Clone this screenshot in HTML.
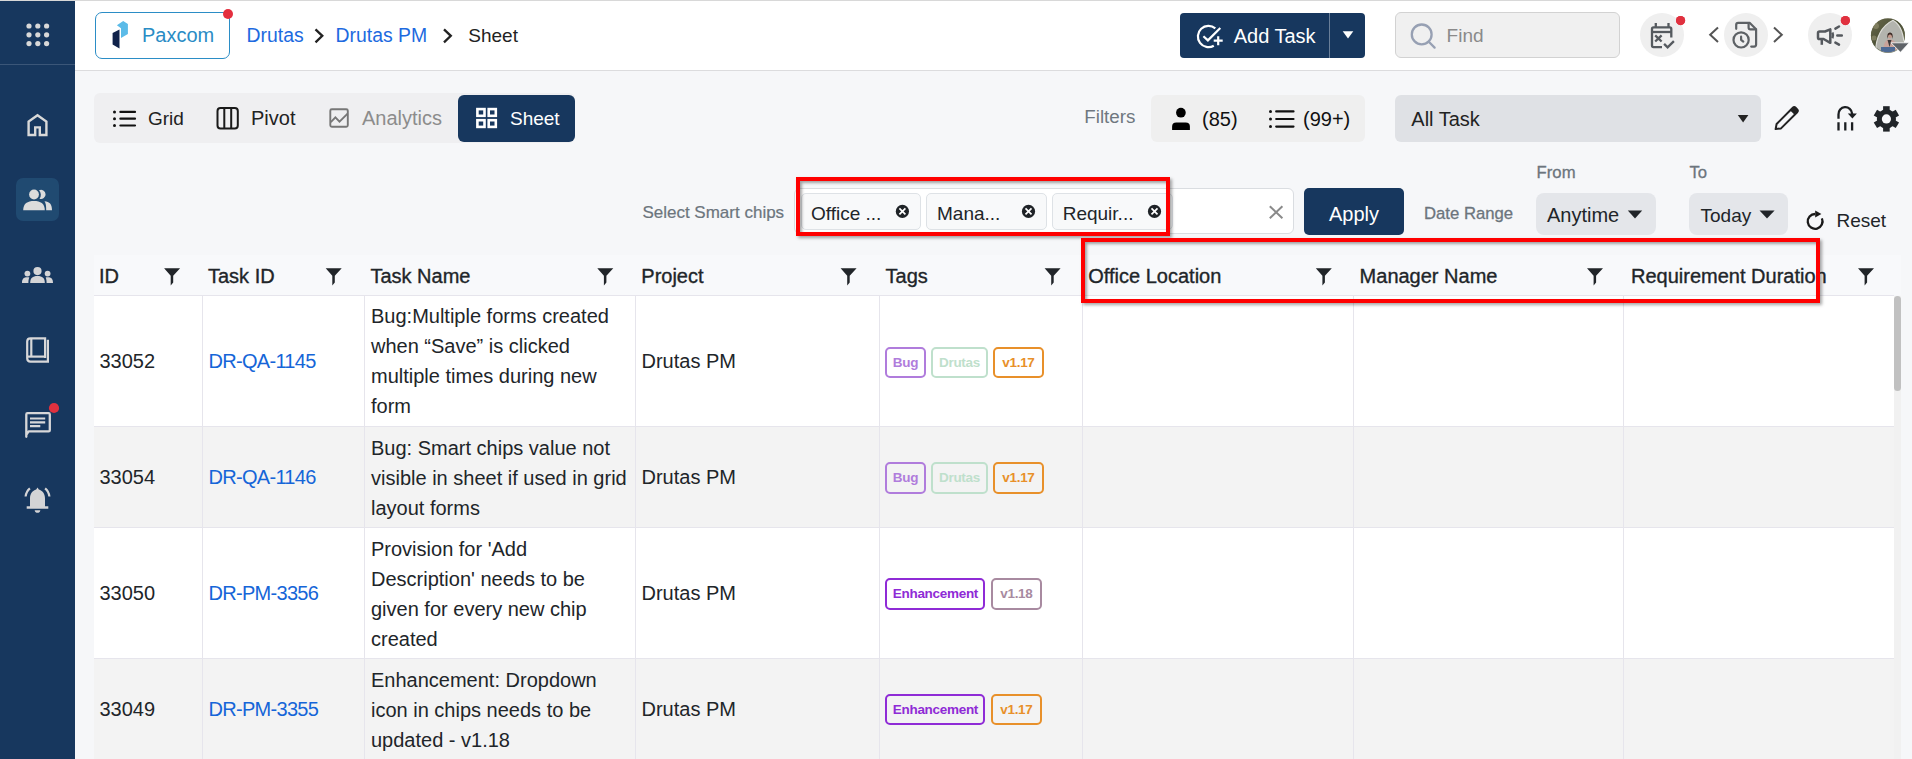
<!DOCTYPE html>
<html><head><meta charset="utf-8">
<style>
*{box-sizing:border-box;margin:0;padding:0}
html,body{width:1912px;height:759px;overflow:hidden;background:#f6f7f9;font-family:"Liberation Sans",sans-serif;color:#212529}
.a{position:absolute}
.t{position:absolute;white-space:nowrap;line-height:1}
svg{position:absolute;overflow:visible}
#side{left:0;top:0;width:75px;height:759px;background:#17375e}
#hdr{left:75px;top:0;width:1837px;height:71px;background:#fff;border-bottom:1px solid #dcdcde}
.circ{position:absolute;width:44px;height:44px;border-radius:50%;background:#efefef}
.rdot{position:absolute;width:10px;height:10px;border-radius:50%;background:#e42f3e}
.col{position:absolute;top:296px;width:1px;height:463px;background:#e6e5ec}
.hrow{position:absolute;left:94px;width:1800px;height:1px;background:#e6e5ec}
.cell{position:absolute;font-size:20px;line-height:30px;white-space:nowrap}
.tag{position:absolute;height:31.3px;border:2px solid;border-radius:5px;font-weight:700;font-size:13.5px;letter-spacing:-0.3px;line-height:27.3px;text-align:center;background:transparent}
.hd{position:absolute;top:266.2px;font-size:20px;line-height:20px;white-space:nowrap;-webkit-text-stroke:0.35px #212529}
.fun{position:absolute;top:268px;width:16px;height:18px}
.red{position:absolute;border:4.5px solid #f00;box-shadow:2px 2px 3px rgba(0,0,0,.35), inset 2px 2px 3px rgba(0,0,0,.35)}
</style></head><body>
<div class="a" style="left:0;top:0;width:1912px;height:1px;background:#d8d8d8;z-index:5"></div>

<!-- sidebar -->
<div id="side" class="a"></div>
<div class="a" style="left:0;top:64px;width:75px;height:1px;background:#3b5678"></div>
<div class="a" style="left:16px;top:178px;width:43px;height:43px;border-radius:7px;background:#204a71"></div>
<!-- header -->
<div id="hdr" class="a"></div>
<div class="a" style="left:95px;top:12px;width:135px;height:47px;border:1.5px solid #2b8dc6;border-radius:7px;background:#fff"></div>
<div class="rdot" style="left:222.5px;top:8.6px"></div>
<div class="t" style="left:142px;top:25.3px;font-size:20px;color:#2a8cc5">Paxcom</div>
<div class="t" style="left:246.5px;top:25.8px;font-size:19.4px;color:#1d6ae0">Drutas</div>
<div class="t" style="left:335.5px;top:25.8px;font-size:19.4px;color:#1d6ae0">Drutas PM</div>
<div class="t" style="left:468.3px;top:26.1px;font-size:19px;color:#222">Sheet</div>
<div class="a" style="left:1180px;top:13px;width:185px;height:45px;border-radius:4px;background:#17375e"></div>
<div class="a" style="left:1329px;top:13px;width:1px;height:45px;background:#6a7f99"></div>
<div class="t" style="left:1233.7px;top:25.9px;font-size:20px;color:#fff">Add Task</div>
<div class="a" style="left:1395px;top:12px;width:225px;height:46px;border:1px solid #d2d2d2;border-radius:6px;background:#f0f0f0"></div>
<div class="t" style="left:1446.6px;top:26.2px;font-size:19px;color:#8a8a8a">Find</div>
<div class="circ" style="left:1640px;top:13px"></div>
<div class="circ" style="left:1724px;top:13px"></div>
<div class="circ" style="left:1808px;top:13px"></div>
<div class="rdot" style="left:1676px;top:16px;width:9px;height:9px"></div>
<div class="rdot" style="left:1841px;top:16px;width:9px;height:9px"></div>
<div class="a" style="left:1871px;top:18.5px;width:34px;height:34px;border-radius:50%;background:radial-gradient(circle at 55% 60%,#c9a89a 0 18%,#8f9a8a 30%,#6f7a60 60%,#4a5238 100%)"></div>
<!-- toolbar -->
<div class="a" style="left:94px;top:93px;width:481px;height:50px;border-radius:6px;background:#efeff1"></div>
<div class="a" style="left:458px;top:95px;width:117px;height:47px;border-radius:6px;background:#17375e"></div>
<div class="t" style="left:148px;top:108.9px;font-size:19px;color:#222">Grid</div>
<div class="t" style="left:251px;top:108px;font-size:20px;color:#222">Pivot</div>
<div class="t" style="left:362px;top:108px;font-size:20px;color:#8c8c8c">Analytics</div>
<div class="t" style="left:510px;top:108.9px;font-size:19px;color:#fff">Sheet</div>
<div class="t" style="left:1084.3px;top:107.9px;font-size:18.8px;color:#6f7780">Filters</div>
<div class="a" style="left:1151px;top:95px;width:214px;height:47px;border-radius:6px;background:#efefef"></div>
<div class="t" style="left:1202px;top:108.7px;font-size:20px;color:#111">(85)</div>
<div class="t" style="left:1303px;top:108.7px;font-size:20px;color:#111">(99+)</div>
<div class="a" style="left:1395px;top:95px;width:366px;height:47px;border-radius:6px;background:#dfe1e5"></div>
<div class="t" style="left:1411.3px;top:109px;font-size:20px;color:#222">All Task</div>
<!-- smart chips row -->
<div class="t" style="left:642.4px;top:204.3px;font-size:17px;color:#6c757d;-webkit-text-stroke:0.2px #6c757d">Select Smart chips</div>
<div class="a" style="left:794px;top:188px;width:500px;height:46px;border:1px solid #dadde1;border-radius:6px;background:#fff"></div>
<div class="a" style="left:801px;top:193px;width:120px;height:36.5px;border:1px solid #dee2e6;border-radius:5px;background:#f8f9fa"></div>
<div class="a" style="left:925.6px;top:193px;width:121px;height:36.5px;border:1px solid #dee2e6;border-radius:5px;background:#f8f9fa"></div>
<div class="a" style="left:1051.6px;top:193px;width:121px;height:36.5px;border:1px solid #dee2e6;border-radius:5px;background:#f8f9fa"></div>
<div class="t" style="left:811px;top:203.9px;font-size:19px;color:#212529">Office ...</div>
<div class="t" style="left:937px;top:203.9px;font-size:19px;color:#212529">Mana...</div>
<div class="t" style="left:1062.7px;top:203.9px;font-size:19px;color:#212529">Requir...</div>
<div class="a" style="left:1304px;top:188px;width:100px;height:46.6px;border-radius:5px;background:#17375e"></div>
<div class="t" style="left:1329px;top:204px;font-size:20px;color:#fff">Apply</div>
<div class="t" style="left:1424px;top:205.9px;font-size:16.7px;color:#6c757d;-webkit-text-stroke:0.3px #6c757d">Date Range</div>
<div class="t" style="left:1536.6px;top:164.6px;font-size:16.7px;color:#6c757d;-webkit-text-stroke:0.3px #6c757d">From</div>
<div class="t" style="left:1689.5px;top:164.6px;font-size:16.7px;color:#6c757d;-webkit-text-stroke:0.3px #6c757d">To</div>
<div class="a" style="left:1536px;top:193px;width:120px;height:41.6px;border-radius:8px;background:#e4e6ea"></div>
<div class="a" style="left:1689px;top:193px;width:99px;height:41.6px;border-radius:8px;background:#e4e6ea"></div>
<div class="t" style="left:1547px;top:205.3px;font-size:20px;color:#212529">Anytime</div>
<div class="t" style="left:1700.5px;top:206.1px;font-size:19px;color:#212529">Today</div>
<div class="t" style="left:1836.5px;top:210.9px;font-size:19px;color:#212529">Reset</div>
<!-- table -->
<div class="a" style="left:94px;top:255px;width:1807px;height:40px;background:#f8f9fb"></div>
<div class="a" style="left:94px;top:296px;width:1800px;height:130px;background:#fff"></div>
<div class="a" style="left:94px;top:426px;width:1800px;height:101px;background:#f3f3f3"></div>
<div class="a" style="left:94px;top:527px;width:1800px;height:131px;background:#fff"></div>
<div class="a" style="left:94px;top:659px;width:1800px;height:100px;background:#f3f3f3"></div>
<div class="hrow" style="top:295px"></div>
<div class="hrow" style="top:426px"></div>
<div class="hrow" style="top:527px"></div>
<div class="hrow" style="top:658px"></div>
<div class="col" style="left:202px"></div>
<div class="col" style="left:364px"></div>
<div class="col" style="left:635px"></div>
<div class="col" style="left:879px"></div>
<div class="col" style="left:1082px"></div>
<div class="col" style="left:1353px"></div>
<div class="col" style="left:1623px"></div>
<div class="a" style="left:1894px;top:296px;width:7px;height:463px;background:#f1f1f1"></div>
<div class="a" style="left:1894px;top:296px;width:7px;height:95px;border-radius:4px;background:#c1c1c1"></div>
<div class="hd" style="left:99px">ID</div>
<div class="hd" style="left:208px">Task ID</div>
<div class="hd" style="left:370.4px">Task Name</div>
<div class="hd" style="left:641.3px">Project</div>
<div class="hd" style="left:885.6px">Tags</div>
<div class="hd" style="left:1088.3px">Office Location</div>
<div class="hd" style="left:1359.6px">Manager Name</div>
<div class="hd" style="left:1631px">Requirement Duration</div>
<div class="t" style="left:99.4px;top:351.3px;font-size:20px;color:#212529">33052</div>
<div class="t" style="left:208.5px;top:351.3px;font-size:20px;color:#1565d8;letter-spacing:-0.7px">DR-QA-1145</div>
<div class="cell" style="left:371px;top:301.3px;line-height:30px;color:#212529">Bug:Multiple forms created<br>when “Save” is clicked<br>multiple times during new<br>form</div>
<div class="t" style="left:641.5px;top:351.3px;font-size:20px;color:#212529">Drutas PM</div>
<div class="tag" style="left:885.4px;top:346.6px;width:40.3px;border-color:#b07cdc;color:#b07cdc">Bug</div>
<div class="tag" style="left:931.4px;top:346.6px;width:56.2px;border-color:#bfe0cc;color:#bfe0cc">Drutas</div>
<div class="tag" style="left:993.3px;top:346.6px;width:50.3px;border-color:#e8902a;color:#e8902a">v1.17</div>
<div class="t" style="left:99.4px;top:466.8px;font-size:20px;color:#212529">33054</div>
<div class="t" style="left:208.5px;top:466.8px;font-size:20px;color:#1565d8;letter-spacing:-0.7px">DR-QA-1146</div>
<div class="cell" style="left:371px;top:432.9px;line-height:30px;color:#212529">Bug: Smart chips value not<br>visible in sheet if used in grid<br>layout forms</div>
<div class="t" style="left:641.5px;top:466.8px;font-size:20px;color:#212529">Drutas PM</div>
<div class="tag" style="left:885.4px;top:462.3px;width:40.3px;border-color:#b07cdc;color:#b07cdc">Bug</div>
<div class="tag" style="left:931.4px;top:462.3px;width:56.2px;border-color:#bfe0cc;color:#bfe0cc">Drutas</div>
<div class="tag" style="left:993.3px;top:462.3px;width:50.3px;border-color:#e8902a;color:#e8902a">v1.17</div>
<div class="t" style="left:99.4px;top:582.8px;font-size:20px;color:#212529">33050</div>
<div class="t" style="left:208.5px;top:582.8px;font-size:20px;color:#1565d8;letter-spacing:-0.7px">DR-PM-3356</div>
<div class="cell" style="left:371px;top:534px;line-height:30px;color:#212529">Provision for 'Add<br>Description' needs to be<br>given for every new chip<br>created</div>
<div class="t" style="left:641.5px;top:582.8px;font-size:20px;color:#212529">Drutas PM</div>
<div class="tag" style="left:885.4px;top:578.4px;width:100.1px;border-color:#8f2bd6;color:#8f2bd6">Enhancement</div>
<div class="tag" style="left:991px;top:578.4px;width:50.8px;border-color:#a88aa0;color:#a88aa0">v1.18</div>
<div class="t" style="left:99.4px;top:698.8px;font-size:20px;color:#212529">33049</div>
<div class="t" style="left:208.5px;top:698.8px;font-size:20px;color:#1565d8;letter-spacing:-0.7px">DR-PM-3355</div>
<div class="cell" style="left:371px;top:664.9px;line-height:30px;color:#212529">Enhancement: Dropdown<br>icon in chips needs to be<br>updated - v1.18</div>
<div class="t" style="left:641.5px;top:698.8px;font-size:20px;color:#212529">Drutas PM</div>
<div class="tag" style="left:885.4px;top:693.9px;width:100.1px;border-color:#8f2bd6;color:#8f2bd6">Enhancement</div>
<div class="tag" style="left:991px;top:693.9px;width:50.8px;border-color:#e8902a;color:#e8902a">v1.17</div>
<svg width="1912" height="759" style="left:0;top:0" viewBox="0 0 1912 759">
<circle cx="29" cy="26" r="2.6" fill="#d8d8d8"/>
<circle cx="29" cy="34.8" r="2.6" fill="#d8d8d8"/>
<circle cx="29" cy="43.6" r="2.6" fill="#d8d8d8"/>
<circle cx="37.8" cy="26" r="2.6" fill="#d8d8d8"/>
<circle cx="37.8" cy="34.8" r="2.6" fill="#d8d8d8"/>
<circle cx="37.8" cy="43.6" r="2.6" fill="#d8d8d8"/>
<circle cx="46.6" cy="26" r="2.6" fill="#d8d8d8"/>
<circle cx="46.6" cy="34.8" r="2.6" fill="#d8d8d8"/>
<circle cx="46.6" cy="43.6" r="2.6" fill="#d8d8d8"/>
<path d="M28.6 135 V121.6 L37.5 115.2 L46.4 121.6 V135 H39.8 V127.4 H35.2 V135 Z" fill="none" stroke="#d9d9d9" stroke-width="2.4" stroke-linejoin="miter"/>
<g fill="#dcdcdc"><circle cx="34" cy="194.5" r="4.9"/><path d="M23.2 210.2 C23.2 203.5 27.5 201 34 201 C40.5 201 44.8 203.5 44.8 210.2 Z"/><path d="M39 190.3 A4.6 4.6 0 1 1 39.5 198.8 A6.5 6.5 0 0 0 39 190.3 Z"/><path d="M44.5 201.2 C49.5 201.6 52 204 52 210.2 H46.2 C46.2 205.5 45.8 203 44.5 201.2 Z"/></g>
<g fill="#d4d4d6"><circle cx="37.5" cy="271.1" r="4.1"/><circle cx="27.4" cy="273.6" r="2.9"/><circle cx="47.6" cy="273.6" r="2.9"/><path d="M30.2 283 C30.2 278 32.5 276 37.5 276 C42.5 276 44.8 278 44.8 283 Z"/><path d="M22 283 C22 279 23.5 277.3 27.4 277.3 C28.3 277.3 28.9 277.4 29.3 277.6 C28.6 279 28.4 281 28.4 283 Z"/><path d="M53 283 C53 279 51.5 277.3 47.6 277.3 C46.7 277.3 46.1 277.4 45.7 277.6 C46.4 279 46.6 281 46.6 283 Z"/></g>
<g fill="none" stroke="#d7d7d9" stroke-width="2.2"><path d="M45.1 358 V338.3 H30.5 Q27.2 338.3 27.2 341.6 V358.3 Q27.2 361.6 30.5 361.6 H47.9 V339.7"/><path d="M27.2 356.6 H45.1"/><path d="M31.3 338.5 V356.6"/></g>
<g fill="none" stroke="#d7d7d9" stroke-width="2.3" stroke-linejoin="round"><path d="M26.3 436.8 V414.4 Q26.3 413.2 27.5 413.2 H48.6 Q49.8 413.2 49.8 414.4 V430.2 Q49.8 431.4 48.6 431.4 H28.6 L26.3 435 Z"/></g><g stroke="#d7d7d9" stroke-width="2.2"><path d="M30 418.5 H45.2 M30 422.3 H45.2 M30 426.1 H40.3"/></g>
<circle cx="54" cy="408" r="5.1" fill="#e0313f"/>
<g fill="#d4d4d6"><path d="M37.5 487.5 L38.8 489.6 C42.4 490.6 45 493.8 45 498.5 V506.2 H48.3 V508.8 H26.7 V506.2 H30 V498.5 C30 493.8 32.6 490.6 36.2 489.6 Z"/><path d="M34.6 510.2 H40.4 C40 512 38.9 512.8 37.5 512.8 C36.1 512.8 35 512 34.6 510.2 Z"/></g><g fill="none" stroke="#d4d4d6" stroke-width="2.2"><path d="M29.9 488.3 C27.5 490.3 26 493 25.6 496.5"/><path d="M45.1 488.3 C47.5 490.3 49 493 49.4 496.5"/></g>
<path d="M112.6 33 L119.5 29.5 V48.5 L112.6 44.6 Z" fill="#10224a"/>
<path d="M116.9 25.3 L123.2 20.9 L127.9 24 V34 L121 38 V28.2 Z" fill="#5bbbe8"/>
<g fill="none" stroke="#222" stroke-width="2.3"><path d="M315.5 29.3 L322.3 35.8 L315.5 42.3"/><path d="M444 29.3 L450.8 35.8 L444 42.3"/></g>
<g fill="none" stroke="#fff" stroke-width="2.2"><path d="M1215.3 28.4 A10.6 10.6 0 1 0 1213.8 45.7"/><path d="M1203.4 36.2 L1207.9 40.4 L1220.3 28"/><path d="M1218.2 36.2 V45.2 M1213.7 40.7 H1222.7"/></g>
<path d="M1342.7 31.3 H1353.3 L1348 38.6 Z" fill="#fff"/>
<g fill="none" stroke="#97a0b3" stroke-width="2.3"><circle cx="1421.7" cy="34.4" r="9.9"/><path d="M1428.8 41.8 L1434.6 47.6" stroke-linecap="round"/></g>
<g fill="none" stroke="#555a5f" stroke-width="2.3"><path d="M1662 47.1 H1653.5 Q1652 47.1 1652 45.6 V28.9 Q1652 27.4 1653.5 27.4 H1669.8 Q1671.3 27.4 1671.3 28.9 V37.4"/><path d="M1652 32 H1671.3"/><path d="M1655.8 23 V27.4 M1668.5 23 V27.4"/><path d="M1655.2 35.3 L1661.6 41.5 M1661.6 35.3 L1655.2 41.5"/><path d="M1664.1 43.9 L1667.6 47.4 L1673.9 41.1"/></g>
<g fill="none" stroke="#555" stroke-width="2"><path d="M1718 27.6 L1710.2 34.8 L1718 42"/><path d="M1774 27.6 L1781.8 34.8 L1774 42"/></g>
<g fill="none" stroke="#5d6165" stroke-width="2.2" stroke-linecap="round" stroke-linejoin="round"><path d="M1736.2 28.8 V24.8 Q1736.2 22.8 1738.2 22.8 H1749.6 L1756.1 29.3 V44.6 Q1756.1 46.6 1754.1 46.6 H1751.2"/><path d="M1748.6 23 V27.5 Q1748.6 29.3 1750.4 29.3 H1755.8"/><circle cx="1741.1" cy="39.9" r="7.6"/><path d="M1741.1 36.7 V39.8 L1743.3 41.6"/></g>
<g fill="none" stroke="#55595e" stroke-width="2.5"><path d="M1830.3 29.4 V42.8 L1823.6 39 H1819.6 Q1818 39 1818 37.4 V33.1 Q1818 31.5 1819.6 31.5 H1825 Z" stroke-linejoin="round"/><path d="M1821.8 39 V44.8"/><path d="M1832.4 32.4 Q1833.6 35.2 1832.4 38.2"/><path d="M1835.4 28.6 L1839 26.5 M1837.3 35.6 H1841.8 M1835.4 42.6 L1839 44.7" stroke-linecap="round"/></g>
<circle cx="1845.3" cy="20.6" r="4.6" fill="#e0313f"/><circle cx="1680.6" cy="20.6" r="4.6" fill="#e0313f"/>
<defs><clipPath id="av"><circle cx="1887.9" cy="35.3" r="17"/></clipPath></defs>
<g clip-path="url(#av)"><defs><linearGradient id="avg" x1="0" y1="0" x2="1" y2="1"><stop offset="0" stop-color="#6b6a4c"/><stop offset="0.5" stop-color="#4b4f36"/><stop offset="1" stop-color="#7a7658"/></linearGradient></defs><rect x="1870" y="18" width="36" height="36" fill="url(#avg)"/><circle cx="1876" cy="26" r="3" fill="#8d8a6a" opacity=".7"/><circle cx="1874" cy="38" r="2.5" fill="#9a9677" opacity=".6"/><path d="M1875.5 54 C1875.5 37 1881.5 26 1893 20.2 C1901 25 1904.5 34 1904.5 54 Z" fill="#b3b4ae" stroke="#dcdcd6" stroke-width="1.2"/><path d="M1883 54 C1883 44 1885 40 1889.5 39 C1894 40 1899 43 1900 54 Z" fill="#c9a39a"/><path d="M1887.5 40 L1889.5 47 L1891.5 40 Z" fill="#3d3a3a"/><ellipse cx="1890" cy="35.5" rx="2.3" ry="2.8" fill="#c49a8c"/><path d="M1887.5 35 C1887.5 31.5 1892.5 31.5 1892.5 35 L1893 39 L1891.8 36 C1891.5 34 1888.5 34 1888.2 36 L1887 39 Z" fill="#3a2a25"/><rect x="1881" y="47" width="14" height="7" fill="#4d6a95"/></g>
<path d="M1891 42.8 H1909.2 L1900.5 52.3 Z" fill="#5f6368" stroke="#fff" stroke-width="0.8"/>
<g fill="#111"><circle cx="114.5" cy="111.9" r="1.5"/><circle cx="114.5" cy="118.7" r="1.5"/><circle cx="114.5" cy="125.5" r="1.5"/></g><g stroke="#111" stroke-width="2.2" stroke-linecap="round"><path d="M120.4 111.9 H135 M120.4 118.7 H135 M120.4 125.5 H135"/></g>
<g fill="none" stroke="#1a1a1a" stroke-width="2"><rect x="217.5" y="108.1" width="20.3" height="20.4" rx="3"/><path d="M224.3 108.1 V128.5 M231.2 108.1 V128.5"/></g>
<g fill="none" stroke="#777" stroke-width="1.9"><rect x="330.3" y="109.2" width="17.5" height="17.6" rx="1.5"/><path d="M330.8 122.1 L335.4 117.3 L339.5 121.6 L347.6 113.6"/></g>
<g fill="none" stroke="#fff" stroke-width="2.6"><rect x="477.4" y="109.1" width="7.1" height="6.7"/><rect x="488.7" y="109.1" width="7.1" height="6.7"/><rect x="477.4" y="120.2" width="7.1" height="6.7"/><rect x="488.7" y="120.2" width="7.1" height="6.7"/></g>
<g fill="#000"><circle cx="1180.9" cy="112.7" r="4.85"/><path d="M1172.1 130 V126.8 Q1172.1 122.6 1176.3 122.6 H1185.7 Q1189.9 122.6 1189.9 126.8 V130 Z"/></g>
<g fill="#111"><circle cx="1270.5" cy="111.4" r="1.5"/><circle cx="1270.5" cy="119" r="1.5"/><circle cx="1270.5" cy="126.6" r="1.5"/></g><g stroke="#111" stroke-width="2.2" stroke-linecap="round"><path d="M1276.2 111.4 H1293.5 M1276.2 119 H1293.5 M1276.2 126.6 H1293.5"/></g>
<path d="M1737.8 115 H1748.4 L1743.1 122.4 Z" fill="#222"/>
<g fill="none" stroke="#222" stroke-width="2" stroke-linejoin="round"><path d="M1775.6 129.1 L1776.6 124 L1792.8 107.8 Q1794.2 106.4 1795.6 107.8 L1797.2 109.4 Q1798.6 110.8 1797.2 112.2 L1781 128.4 Z"/></g><path d="M1792.8 107.8 Q1794.2 106.4 1795.6 107.8 L1797.2 109.4 Q1798.6 110.8 1797.2 112.2 L1794.6 114.8 L1790.2 110.4 Z" fill="#222"/>
<g fill="none" stroke="#1c1f22" stroke-width="2.3"><path d="M1838.5 118.7 V114.5 A6.8 6.8 0 0 1 1852.1 113.5 V114"/><path d="M1838.5 122.2 V130.6 M1845.3 122.2 V130.6 M1852.1 122.2 V130.6"/></g><path d="M1847.8 113.4 H1856.9 L1852.4 118.4 Z" fill="#1c1f22"/>
<g fill="#212529" transform="translate(1886.4 118.9)"><circle r="9.6"/><rect x="-3.3" y="-12.7" width="6.6" height="25.4"/><rect x="-3.3" y="-12.7" width="6.6" height="25.4" transform="rotate(60)"/><rect x="-3.3" y="-12.7" width="6.6" height="25.4" transform="rotate(120)"/><circle r="4.6" fill="#f7f8fa"/></g>
<circle cx="902.4" cy="211.4" r="6.6" fill="#1f2327"/><path d="M899.4 208.4 L905.4 214.4 M905.4 208.4 L899.4 214.4" stroke="#fff" stroke-width="1.7"/>
<circle cx="1028.5" cy="211.4" r="6.6" fill="#1f2327"/><path d="M1025.5 208.4 L1031.5 214.4 M1031.5 208.4 L1025.5 214.4" stroke="#fff" stroke-width="1.7"/>
<circle cx="1154.5" cy="211.4" r="6.6" fill="#1f2327"/><path d="M1151.5 208.4 L1157.5 214.4 M1157.5 208.4 L1151.5 214.4" stroke="#fff" stroke-width="1.7"/>
<path d="M1269.8 206.2 L1282.4 218.2 M1282.4 206.2 L1269.8 218.2" stroke="#8a8a8a" stroke-width="2"/>
<path d="M1627.8 210.4 H1642.2 L1635 218.4 Z" fill="#212529"/><path d="M1759.5 210.4 H1774.6 L1767 218.4 Z" fill="#212529"/>
<g fill="none" stroke="#1a1a1a" stroke-width="2.3"><path d="M1821.9 218.4 A7.4 7.4 0 1 1 1815.2 214"/></g><path d="M1815.2 210.4 L1821.4 213.9 L1815.2 217.5 Z" fill="#1a1a1a"/>
<path d="M164.1 268.3 H180.1 L173.2 275.7 V282.6 L170.7 285.6 V275.7 Z" fill="#212529"/>
<path d="M325.7 268.3 H341.7 L334.8 275.7 V282.6 L332.3 285.6 V275.7 Z" fill="#212529"/>
<path d="M597.3 268.3 H613.3 L606.4 275.7 V282.6 L603.9 285.6 V275.7 Z" fill="#212529"/>
<path d="M840.6 268.3 H856.6 L849.7 275.7 V282.6 L847.2 285.6 V275.7 Z" fill="#212529"/>
<path d="M1044.6 268.3 H1060.6 L1053.6999999999998 275.7 V282.6 L1051.1999999999998 285.6 V275.7 Z" fill="#212529"/>
<path d="M1315.8 268.3 H1331.8 L1324.8999999999999 275.7 V282.6 L1322.3999999999999 285.6 V275.7 Z" fill="#212529"/>
<path d="M1587 268.3 H1603 L1596.1 275.7 V282.6 L1593.6 285.6 V275.7 Z" fill="#212529"/>
<path d="M1858 268.3 H1874 L1867.1 275.7 V282.6 L1864.6 285.6 V275.7 Z" fill="#212529"/>
</svg>
<div class="red" style="left:796px;top:177px;width:374px;height:59px"></div>
<div class="red" style="left:1081px;top:238px;width:739px;height:65px"></div>
</body></html>
